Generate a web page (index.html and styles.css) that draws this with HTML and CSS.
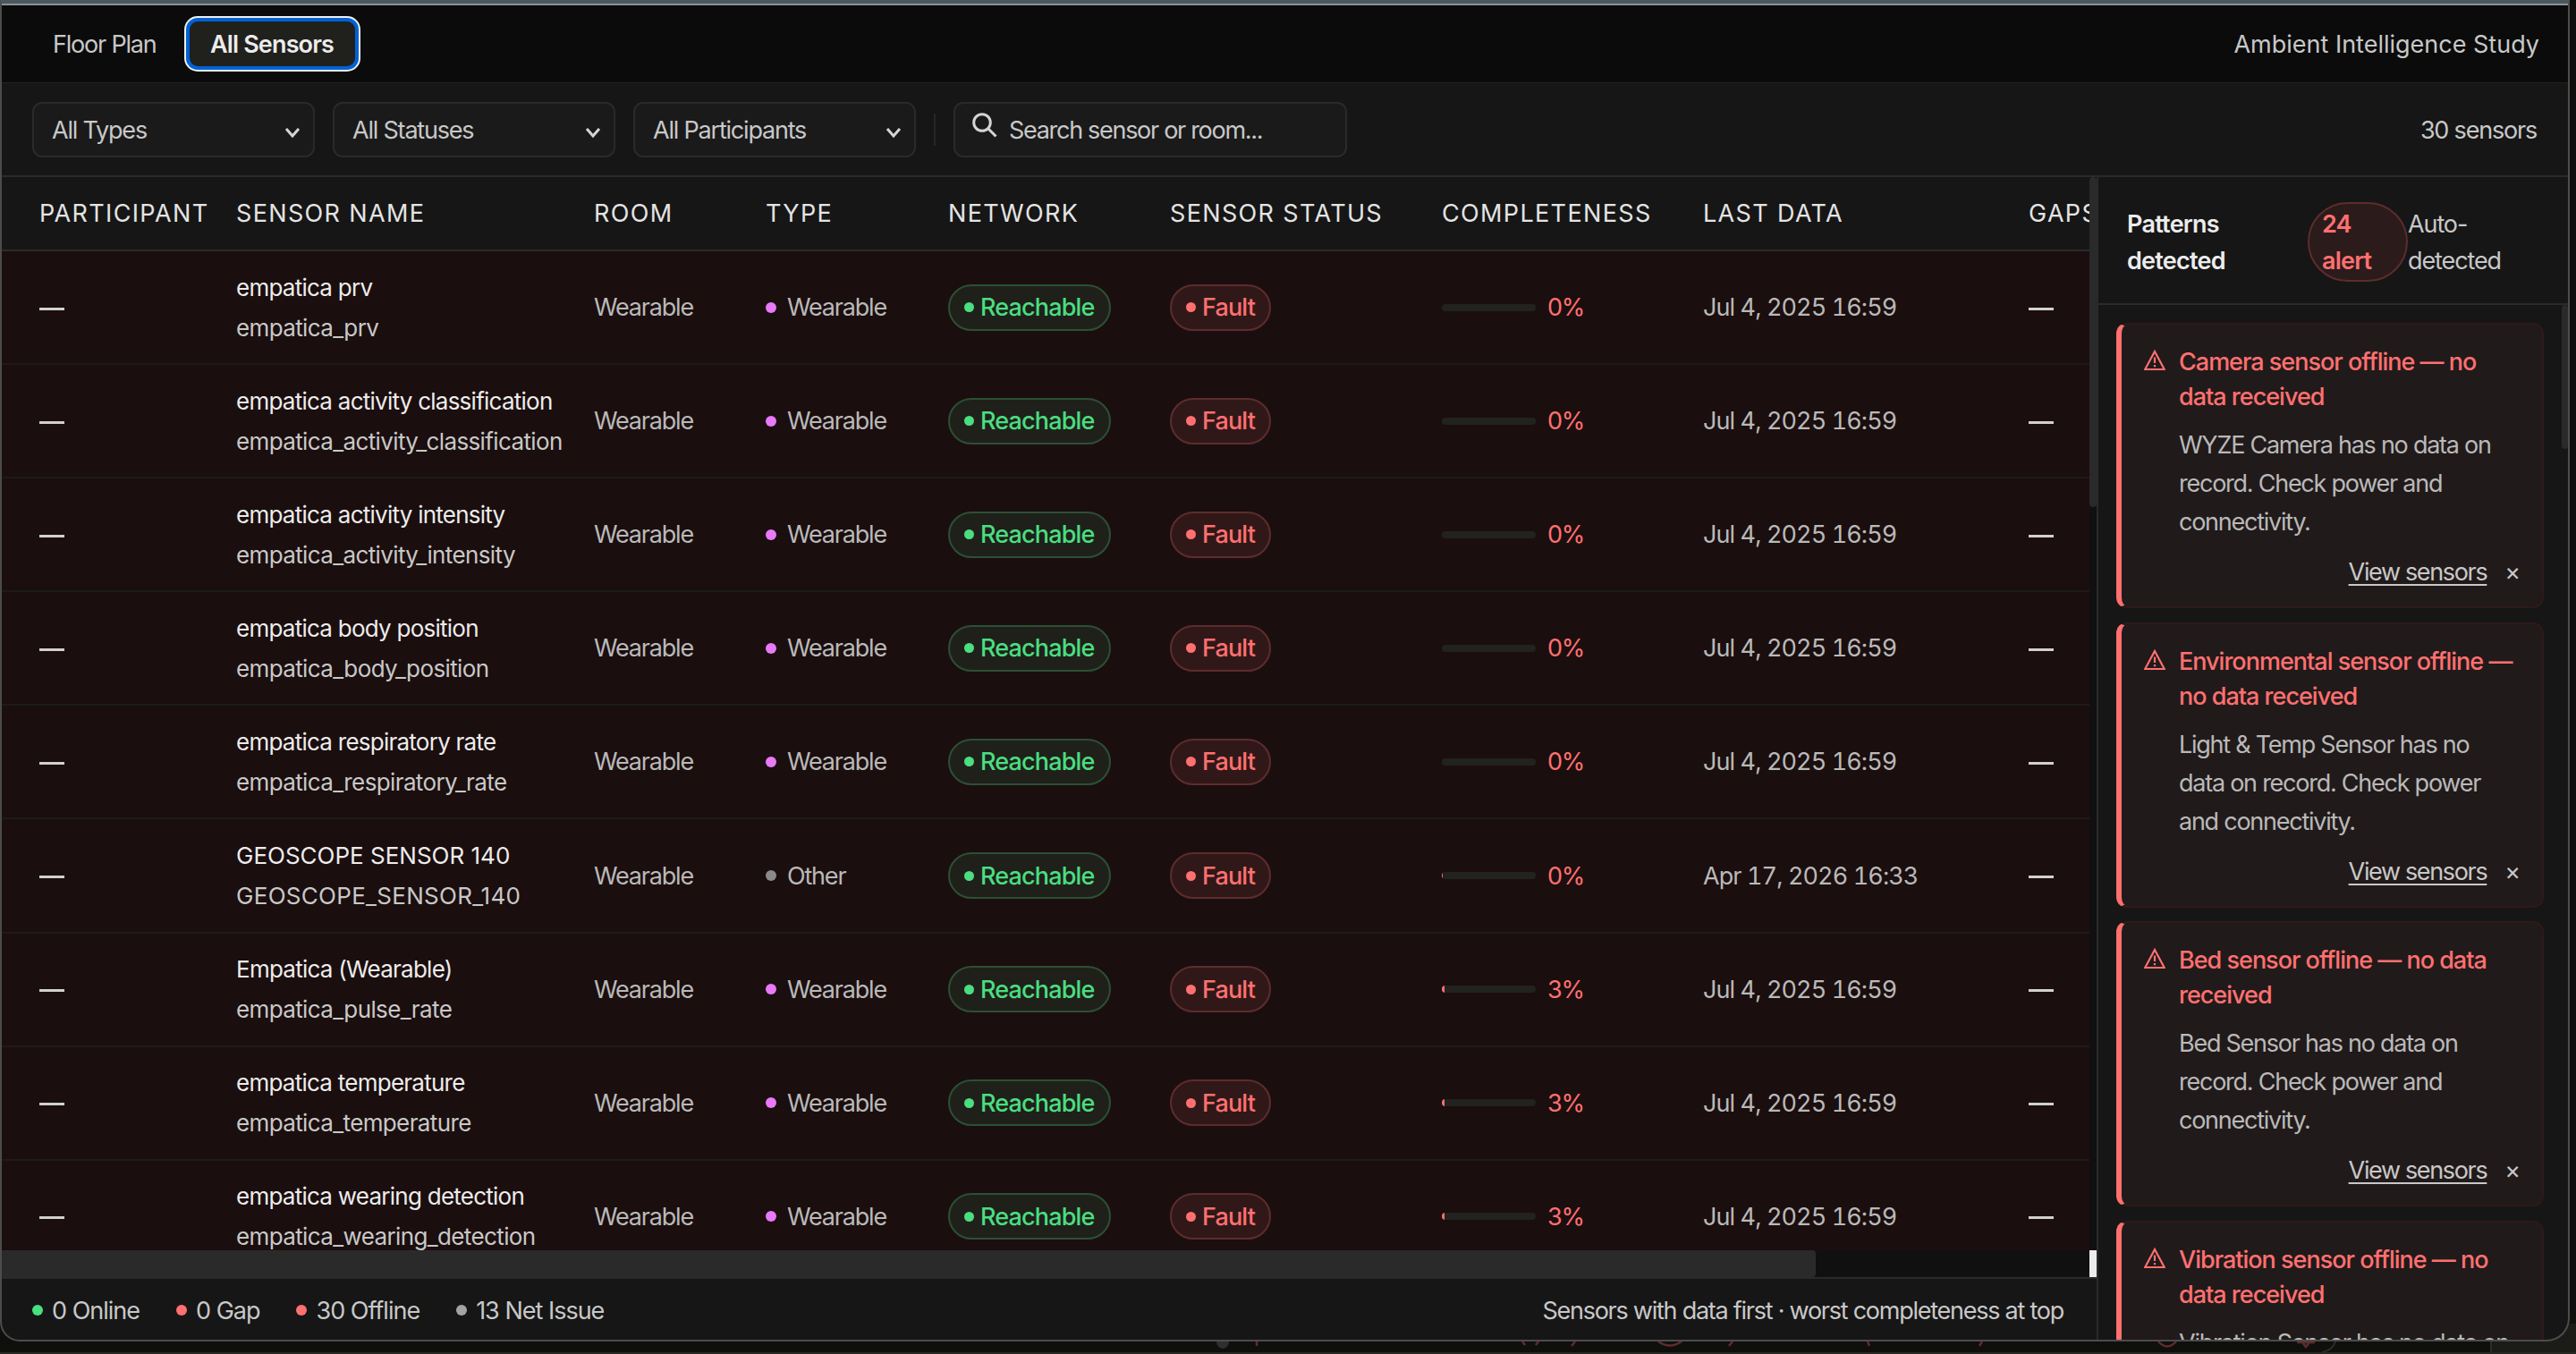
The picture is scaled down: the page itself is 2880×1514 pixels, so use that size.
FILE: index.html
```html
<!DOCTYPE html>
<html lang="en">
<head>
<meta charset="utf-8">
<title>All Sensors</title>
<link rel="stylesheet" href="styles.css">
</head>
<body>

<div class="window">
  <header class="topbar">
    <button class="tab">Floor Plan</button>
    <button class="tab active">All Sensors</button>
    <span class="study">Ambient Intelligence Study</span>
  </header>

  <div class="filters">
    <div class="select"><span>All Types</span><svg class="chevron" viewBox="0 0 18 12"><path d="M2 2l7 8 7-8"/></svg></div>
    <div class="select"><span>All Statuses</span><svg class="chevron" viewBox="0 0 18 12"><path d="M2 2l7 8 7-8"/></svg></div>
    <div class="select"><span>All Participants</span><svg class="chevron" viewBox="0 0 18 12"><path d="M2 2l7 8 7-8"/></svg></div>
    <div class="divider"></div>
    <div class="search">
      <svg viewBox="0 0 28 28"><circle cx="11" cy="11" r="9.3"/><path d="M18 18l8.5 8.5"/></svg>
      <span>Search sensor or room...</span>
    </div>
    <span class="count">30 sensors</span>
  </div>

  <div class="main">
    <section class="list">
      <div class="table-wrap">
        <div class="table" id="table">
          <div class="row head">
            <span>PARTICIPANT</span><span>SENSOR NAME</span><span>ROOM</span><span>TYPE</span><span>NETWORK</span><span>SENSOR STATUS</span><span>COMPLETENESS</span><span>LAST DATA</span><span>GAPS</span>
          </div>
        </div>
        <div class="vscroll"><div class="vthumb"></div></div>
      </div>
      <div class="hscroll"><div class="hthumb"></div><div class="corner"></div></div>
      <footer class="footer">
        <span class="stat"><i class="dot green"></i>0 Online</span>
        <span class="stat"><i class="dot red"></i>0 Gap</span>
        <span class="stat"><i class="dot red"></i>30 Offline</span>
        <span class="stat"><i class="dot grey"></i>13 Net Issue</span>
        <span class="note">Sensors with data first · worst completeness at top</span>
      </footer>
    </section>

    <aside class="panel">
      <div class="panel-head">
        <strong>Patterns detected</strong>
        <span class="alert-count">24 alert</span>
        <span class="auto">Auto-detected</span>
      </div>
      <div class="cards" id="cards">
        <div class="panel-thumb"></div>
      </div>
    </aside>
  </div>
</div>

<!-- sliver of the windows underneath -->
<svg class="behind" viewBox="0 0 2880 34">
  <rect x="2785" y="0" width="95" height="34" fill="#1b1b18"/>
  <rect x="2873" y="0" width="7" height="34" fill="#1c1c16"/>
  <path d="M0 33H2880" stroke="#272724" stroke-width="2"/>
  <path d="M2596 32Q2608 30 2611 20M2785 20V32" stroke="#2c2c2c" stroke-width="2" fill="none"/>
  <path d="M1360 20h14q0 6-6 8-8-1-8-8z" fill="#2f2f2f"/>
  <path d="M1405 20v5M1702 20l3 4M1720 20l-3 4M1761 20l-4 5M1937 20l-4 5M2088 20l2 5M2216 20l-3 5M1854 20q13 9 26 0M2413 20q10 11 20 0M2568 21h20M2574 21l4 5 4-5" stroke="#5e2c2d" stroke-width="2.5" fill="none"/>
</svg>

<script>
const sensors = [
  ["empatica prv", "empatica_prv", "Wearable", 0, "Jul 4, 2025 16:59"],
  ["empatica activity classification", "empatica_activity_classification", "Wearable", 0, "Jul 4, 2025 16:59"],
  ["empatica activity intensity", "empatica_activity_intensity", "Wearable", 0, "Jul 4, 2025 16:59"],
  ["empatica body position", "empatica_body_position", "Wearable", 0, "Jul 4, 2025 16:59"],
  ["empatica respiratory rate", "empatica_respiratory_rate", "Wearable", 0, "Jul 4, 2025 16:59"],
  ["GEOSCOPE SENSOR 140", "GEOSCOPE_SENSOR_140", "Other", 0, "Apr 17, 2026 16:33"],
  ["Empatica (Wearable)", "empatica_pulse_rate", "Wearable", 3, "Jul 4, 2025 16:59"],
  ["empatica temperature", "empatica_temperature", "Wearable", 3, "Jul 4, 2025 16:59"],
  ["empatica wearing detection", "empatica_wearing_detection", "Wearable", 3, "Jul 4, 2025 16:59"]
];

const alerts = [
  ["Camera sensor offline — no<br>data received", "WYZE Camera has no data on<br>record. Check power and<br>connectivity."],
  ["Environmental sensor offline —<br>no data received", "Light &amp; Temp Sensor has no<br>data on record. Check power<br>and connectivity."],
  ["Bed sensor offline — no data<br>received", "Bed Sensor has no data on<br>record. Check power and<br>connectivity."],
  ["Vibration sensor offline — no<br>data received", "Vibration Sensor has no data on<br>record. Check power and<br>connectivity."]
];

const table = document.getElementById("table");
sensors.forEach(([name, id, type, pct, last]) => {
  const other = type === "Other";
  const fill = other ? 1 : pct;
  table.insertAdjacentHTML("beforeend", `
    <div class="row">
      <span class="dash"></span>
      <span class="name ${other ? "caps" : ""}"><b>${name}</b><small>${id}</small></span>
      <span>Wearable</span>
      <span class="type"><i class="dot ${other ? "other" : "pink"}"></i>${type}</span>
      <span><em class="pill ok"><i class="dot"></i>Reachable</em></span>
      <span><em class="pill fault"><i class="dot"></i>Fault</em></span>
      <span class="complete"><i class="bar"><i class="fill" style="width: ${fill}%"></i></i>${pct}%</span>
      <span class="last">${last}</span>
      <span class="dash"></span>
    </div>`);
});

const cards = document.getElementById("cards");
alerts.forEach(([title, text]) => {
  cards.insertAdjacentHTML("beforeend", `
    <div class="card">
      <svg class="warn" viewBox="0 0 24 24"><path d="M12 2L22.8 22H1.2z"/><path d="M12 8.5v6.5M12 17v2.3"/></svg>
      <div class="card-body">
        <h4>${title}</h4>
        <p>${text}</p>
        <div class="actions"><a>View sensors</a><span>×</span></div>
      </div>
    </div>`);
});
</script>

</body>
</html>
```
FILE: styles.css
```css
* {
  box-sizing: border-box;
}

body {
  margin: 0;
  height: 1514px;
  overflow: hidden;
  position: relative;
  background: #0f0f0e;
  color: #c8c8c8;
  font-family: Inter, sans-serif;
  font-size: 27px;
  letter-spacing: -1.2px;
}

.window {
  width: 2873px;
  height: 1500px;
  display: flex;
  flex-direction: column;
  background: #161616;
  border: 2px solid #4c4c4c;
  border-top: 4px solid #4b585e;
  border-radius: 0 0 26px 22px;
  overflow: hidden;
  position: relative;
  z-index: 1;
}

.behind {
  position: absolute;
  left: 0;
  bottom: 0;
  width: 2880px;
  height: 34px;
}

/* top bar */
.topbar {
  height: 89px;
  flex: none;
  display: flex;
  align-items: center;
  padding: 0 32px 0 41px;
  background: #0b0b0b;
  border-top: 2px solid #8b9494;
  border-bottom: 1px solid #22221d;
}

.tab {
  height: 50px;
  padding: 0 16px;
  border: none;
  background: none;
  color: #c8c8c8;
  font: inherit;
  letter-spacing: inherit;
}

.tab.active {
  width: 185px;
  margin-left: 21px;
  padding: 0;
  border-radius: 9px;
  background: #20201c;
  color: #ececec;
  font-weight: 600;
  letter-spacing: -0.85px;
  box-shadow: 0 0 0 4px #0062d6, 0 0 0 6px #f0f0f0;
}

.study {
  margin-left: auto;
  letter-spacing: 0;
}

/* filters */
.filters {
  height: 105px;
  flex: none;
  display: flex;
  align-items: center;
  padding: 0 35px 0 34px;
  border-bottom: 2px solid #2a2a2a;
}

.select,
.search {
  height: 62px;
  display: flex;
  align-items: center;
  background: #1a1a1a;
  border: 2px solid #2a2a2a;
  border-radius: 11px;
}

.select span,
.search span,
.count {
  padding-top: 2px;
}

.select {
  width: 316px;
  margin-right: 20px;
  padding: 0 14px 0 20px;
  justify-content: space-between;
}

.chevron {
  width: 18px;
  height: 12px;
  margin-top: 7px;
  fill: none;
  stroke: #d4d4d4;
  stroke-width: 3;
}

.divider {
  width: 2px;
  height: 36px;
  margin-right: 20px;
  background: #262626;
}

.search {
  width: 440px;
  padding-left: 19px;
  letter-spacing: -1.3px;
}

.search svg {
  width: 28px;
  height: 28px;
  margin: -10px 13px 0 0;
  fill: none;
  stroke: #d4d4d4;
  stroke-width: 3;
}

.count {
  margin-left: auto;
}

/* layout */
.main {
  flex: 1;
  display: flex;
  min-height: 0;
}

.list {
  width: 2344px;
  flex: none;
  display: flex;
  flex-direction: column;
  border-right: 2px solid #2a2a2a;
}

.table-wrap {
  height: 1200px;
  display: flex;
  overflow: hidden;
}

.table {
  width: 2334px;
  overflow: hidden;
}

.row {
  height: 127.1px;
  display: grid;
  grid-template-columns: 220px 400px 192px 204px 248px 304px 292px 364px 200px;
  align-items: center;
  padding-left: 42px;
  background: #1b0e0e;
  border-bottom: 2px solid #1d1a1b;
  white-space: nowrap;
}

.row.head {
  height: 83px;
  background: #161616;
  border-bottom: 2px solid #2a2a2a;
  color: #e4e4e4;
  letter-spacing: 1.35px;
}

.dash {
  width: 28px;
  height: 3px;
  margin-top: 3px;
  background: #d0d0d0;
}

.name b,
.name small {
  display: block;
  font-size: 26px;
  font-weight: 400;
  line-height: 45px;
}

.name b {
  color: #ececec;
  letter-spacing: -0.75px;
}

.name small {
  color: #c8c8c8;
  letter-spacing: -0.62px;
}

.name.caps b {
  letter-spacing: 0;
}

.name.caps small {
  letter-spacing: 0.3px;
}

.row:not(.head) {
  color: #b9b9b9;
}

.last {
  font-variant-numeric: tabular-nums;
  letter-spacing: -0.9px;
}

.dot {
  width: 12px;
  height: 12px;
  flex: none;
  border-radius: 50%;
}

.type {
  display: flex;
  align-items: center;
  gap: 12px;
}

.pink { background: #e879f9; }
.other { background: #8a8a8a; }
.green { background: #4ade80; }
.red { background: #ff7070; }
.grey { background: #a3a3a3; }

.pill {
  display: inline-flex;
  align-items: center;
  gap: 7px;
  height: 52px;
  padding: 0 16px;
  border: 2px solid;
  border-radius: 26px;
  font-style: normal;
  font-weight: 500;
  letter-spacing: -0.85px;
}

.pill .dot {
  width: 11px;
  height: 11px;
  background: currentColor;
}

.ok {
  width: 182px;
  color: #4ade80;
  background: #20201b;
  border-color: #2b5034;
}

.fault {
  width: 113px;
  color: #ff7070;
  background: #311818;
  border-color: #5e2c2d;
}

.complete {
  display: flex;
  align-items: center;
  color: #ff7070;
}

.bar {
  width: 105px;
  height: 8px;
  margin-right: 13px;
  border-radius: 4px;
  background: #222220;
  overflow: hidden;
}

.fill {
  display: block;
  height: 8px;
  background: #ff7070;
}

.vscroll {
  width: 8px;
  background: #101010;
}

.vthumb {
  height: 369px;
  border-radius: 4px;
  background: #2a2a2a;
}

.hscroll {
  height: 30px;
  flex: none;
  display: flex;
  justify-content: space-between;
  background: #101010;
}

.hthumb {
  width: 2028px;
  background: #2a2a2a;
  border-radius: 0 4px 4px 0;
}

.corner {
  width: 8px;
  background: #ececec;
}

.footer {
  flex: 1;
  display: flex;
  align-items: center;
  gap: 41px;
  padding: 2px 37px 0 34px;
  border-top: 2px solid #2a2a2a;
}

.stat {
  display: flex;
  align-items: center;
  gap: 10px;
  letter-spacing: -1px;
}

.note {
  margin-left: auto;
  letter-spacing: -1.25px;
}

/* patterns panel */
.panel {
  flex: 1;
  min-width: 0;
  display: flex;
  flex-direction: column;
}

.panel-head {
  height: 143px;
  flex: none;
  display: flex;
  align-items: center;
  padding: 4px 0 0 32px;
  line-height: 41px;
  border-bottom: 2px solid #2a2a2a;
}

.panel-head strong {
  width: 202px;
  flex: none;
  padding-right: 60px;
  color: #ececec;
  font-weight: 600;
  letter-spacing: -0.75px;
}

.alert-count {
  width: 112px;
  height: 89px;
  flex: none;
  padding: 2px 14px;
  border: 2px solid #5e2c2d;
  border-radius: 45px;
  background: #2b1b1b;
  color: #ff7070;
  font-weight: 600;
  letter-spacing: -0.8px;
}

.auto {
  width: 120px;
  letter-spacing: -1.1px;
}

.cards {
  flex: 1;
  position: relative;
  min-height: 0;
  padding: 20px 27px 0 20px;
  overflow: hidden;
}

.panel-thumb {
  position: absolute;
  top: 0;
  right: 0;
  width: 7px;
  height: 161px;
  border-radius: 4px;
  background: #2a2a2a;
}

.card {
  height: 319px;
  margin-bottom: 15.7px;
  display: flex;
  padding: 22px 25px 0 25px;
  border: 2px solid #2f1919;
  border-left: 6px solid #ff7070;
  border-radius: 12px;
  background: #211a1a;
}

.warn {
  width: 24px;
  height: 24px;
  flex: none;
  margin: 6px 15px 0 0;
  fill: none;
  stroke: #ff7070;
  stroke-width: 2.2;
}

.card-body {
  flex: 1;
  min-width: 0;
  white-space: nowrap;
}

.card h4 {
  margin: 0 0 13px;
  color: #ff7070;
  font-size: 27px;
  font-weight: 500;
  line-height: 39px;
  letter-spacing: -1px;
}

.card p {
  margin: 0;
  color: #b9b9b9;
  line-height: 43px;
  letter-spacing: -1.25px;
}

.actions {
  display: flex;
  justify-content: flex-end;
  gap: 20px;
  margin-top: 15px;
  line-height: 40px;
}

.actions a {
  letter-spacing: -1.35px;
  text-decoration: underline;
  text-underline-offset: 4px;
}
```
